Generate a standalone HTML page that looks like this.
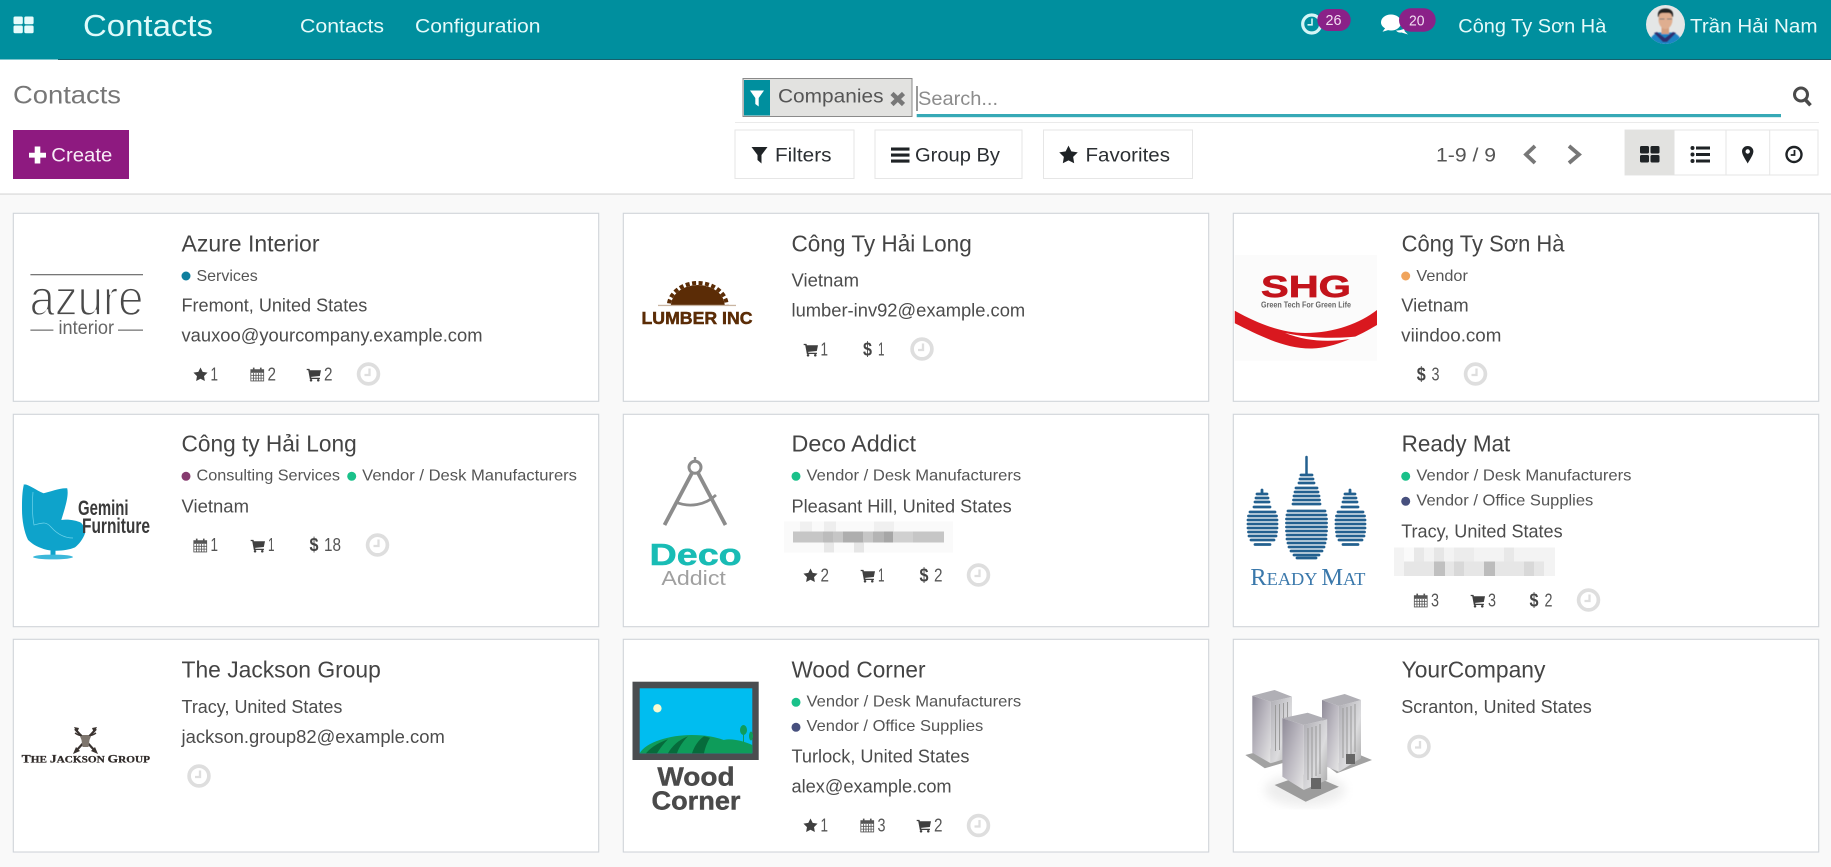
<!DOCTYPE html>
<html lang="vi"><head><meta charset="utf-8"><title>Contacts</title>
<style>
html,body{margin:0;padding:0;background:#f9f9f9;width:1831px;height:867px;overflow:hidden}
svg{display:block}
text{font-family:"Liberation Sans","Noto Sans CJK SC",sans-serif}
.c{fill:#fff;stroke:#d0d4d9;stroke-width:1.1}
.ttl{font-size:23px;fill:#444}
.tag{font-size:16px;fill:#555}
.bd{font-size:18.6px;fill:#4c4c4c}
.n{font-size:18px;fill:#555}
.d{font-size:19px;fill:#444;font-weight:bold}
.nav{font-size:19px;fill:#e6fafa}
.btn{fill:#fff;stroke:#e6e6e6;stroke-width:1}
.bt{font-size:19.5px;fill:#2b2f33}
</style></head><body>
<svg xmlns="http://www.w3.org/2000/svg" width="1831" height="867" viewBox="0 0 1831 867">
<defs>
<symbol id="star" viewBox="0 0 16 16"><path fill="#3f3f3f" d="M8 .5l2.4 4.9 5.4.8-3.9 3.8.9 5.4L8 12.9l-4.8 2.5.9-5.4L.2 6.2l5.4-.8z"/></symbol>
<symbol id="star2" viewBox="0 0 16 16"><path fill="#1f2326" d="M8 .5l2.4 4.9 5.4.8-3.9 3.8.9 5.4L8 12.9l-4.8 2.5.9-5.4L.2 6.2l5.4-.8z"/></symbol>
<symbol id="cal" viewBox="0 0 16 16"><path fill="none" stroke="#555" stroke-width=".9" d="M.9 3h14.2v12.400H.9zM.9 6.200h14.200M.9 9.200h14.200M.9 12.300h14.200M3.800 6v9.400M6.600 6v9.400M9.400 6v9.400M12.200 6v9.400"/><path fill="#555" d="M.9 3h14.200v2.600H.9zM3.200.7h1.800v3.400H3.200zM11 .7h1.800v3.400H11z"/></symbol>
<symbol id="cart" viewBox="0 0 16 16"><path fill="#3f3f3f" d="M.2 2h3.100l.4 1.600H16l-1.300 6.300-9.600 1 .3 1h9.400V13.300H3.700L1.900 3.400H.2z"/><circle cx="5" cy="14.600" r="1.400" fill="#3f3f3f"/><circle cx="13" cy="14.600" r="1.400" fill="#3f3f3f"/></symbol>
<symbol id="clk" viewBox="0 0 24 24"><circle cx="12" cy="12" r="9.900" fill="none" stroke="#dedede" stroke-width="3.700"/><path fill="none" stroke="#dedede" stroke-width="2.300" d="M13 6.500V13H8"/></symbol>
<linearGradient id="gl" x1="0" x2="1" y1="0" y2="1"><stop offset="0" stop-color="#8f8b98"/><stop offset=".5" stop-color="#bdbac2"/><stop offset="1" stop-color="#e6e6e6"/></linearGradient>
<linearGradient id="gr" x1="0" x2="1" y1="0" y2="1"><stop offset="0" stop-color="#b0afb5"/><stop offset=".6" stop-color="#dcdcde"/><stop offset="1" stop-color="#a8a8a8"/></linearGradient>
<clipPath id="av"><circle cx="1665.500" cy="24.500" r="19.500"/></clipPath>
<clipPath id="saw"><rect x="650" y="278" width="96" height="27"/></clipPath>
<filter id="sh"><feGaussianBlur stdDeviation="5"/></filter>
<filter id="s1"><feGaussianBlur stdDeviation=".5"/></filter>
</defs>

<!-- NAVBAR -->
<rect width="1831" height="59.500" fill="#008f9e"/>
<rect x="58" y="59" width="1773" height="1" fill="#17606c"/>
<g fill="#e6fbfb"><rect x="13.500" y="16.500" width="9.300" height="7.800" rx="1.500"/><rect x="24.300" y="16.500" width="9.300" height="7.800" rx="1.500"/><rect x="13.500" y="25.500" width="9.300" height="7.800" rx="1.500"/><rect x="24.300" y="25.500" width="9.300" height="7.800" rx="1.500"/></g>
<text x="83" y="36" font-size="31" fill="#dffafa" textLength="130" lengthAdjust="spacingAndGlyphs">Contacts</text>
<text class="nav" x="300" y="32.500" textLength="84" lengthAdjust="spacingAndGlyphs">Contacts</text>
<text class="nav" x="415" y="32.500" textLength="125.500" lengthAdjust="spacingAndGlyphs">Configuration</text>
<circle cx="1311.700" cy="24" r="9" fill="none" stroke="#d4f6f6" stroke-width="3.200"/><path fill="none" stroke="#d4f6f6" stroke-width="1.600" d="M1312 18.500v6.300h-4.500"/>
<rect x="1317.300" y="9" width="33.400" height="22" rx="11" fill="#8a2188"/>
<text x="1325.500" y="25" font-size="14.500" fill="#f3dff2" textLength="16" lengthAdjust="spacingAndGlyphs">26</text>
<path fill="#fff" d="M1391 14.500c5.800 0 10 3.500 10 8s-4.200 8-10 8c-1 0-2-.1-2.900-.4l-5.600 1.700 2.600-3.500c-2.500-1.400-4.100-3.500-4.100-5.800 0-4.500 4.200-8 10-8z"/>
<path fill="#fff" d="M1396 30.500c3.500 0 7.500-1 9-2.500l-.5 3 3.500 3.500-6.500-2c-2 .3-4 0-5.500-2z"/>
<rect x="1399" y="8.300" width="36.700" height="23.400" rx="11.700" fill="#8a2188"/>
<text x="1409" y="25.500" font-size="14.500" fill="#f3dff2" textLength="15.500" lengthAdjust="spacingAndGlyphs">20</text>
<text class="nav" x="1458.300" y="32.500" textLength="148" lengthAdjust="spacingAndGlyphs">Công Ty Sơn Hà</text>
<g clip-path="url(#av)"><rect x="1645" y="4" width="41" height="41" fill="#e4e6e6"/>
<g filter="url(#s1)"><path fill="#1c84c6" d="M1649 46c0-9 5-12 9-13.500h15c4 1.500 9 4.500 9 13.500z"/><path fill="#2d2f70" d="M1657 32l8 6 8-6 3 1-9 9h-4l-9-9z"/>
<rect x="1661.500" y="26" width="7.500" height="8" fill="#d49f80"/><ellipse cx="1665.500" cy="19.500" rx="7" ry="9.500" fill="#dfae90"/>
<path fill="#222" d="M1658 17c-1-6 2.500-8.500 7.500-8.500s8.500 2.500 7.500 8.500l-1-.5c-.5-2.500-1.500-3.500-3.500-3.500h-6c-2.500 0-3.500 1.500-3.500 3.500z"/>
<path fill="#777" d="M1659.500 18.500h5v1h-5zM1667 18.500h5v1h-5z"/></g></g>
<text class="nav" x="1690" y="32.500" textLength="127.500" lengthAdjust="spacingAndGlyphs">Trần Hải Nam</text>

<!-- CONTROL PANEL -->
<rect y="60" width="1831" height="134" fill="#fff"/>
<rect y="193.500" width="1831" height="1.100" fill="#d6d6d6"/>
<text x="13" y="103.500" font-size="25" fill="#777" textLength="108" lengthAdjust="spacingAndGlyphs">Contacts</text>
<rect x="13" y="130" width="116" height="49" fill="#8e1a80"/>
<path fill="#fff" d="M34.700 147h5.600v6.300H46v4.800h-5.700v5.900h-5.600v-5.900H29v-4.800h5.700z" transform="translate(0,-.5)"/>
<text x="51.300" y="161.500" font-size="19.500" fill="#f8ecf7" textLength="61" lengthAdjust="spacingAndGlyphs">Create</text>

<rect x="743" y="78.500" width="169" height="38" fill="#e2e2e0" stroke="#8a8a8a" stroke-width="1"/>
<rect x="744" y="80" width="26" height="35.500" fill="#008f9e"/>
<path fill="#fff" d="M750 90.500h14l-5.300 7.500v8.500l-3.400-2.500v-6z"/>
<text x="778" y="102.500" font-size="19.500" fill="#555" textLength="105.500" lengthAdjust="spacingAndGlyphs">Companies</text>
<path fill="none" stroke="#777" stroke-width="4.500" d="M892 93.500l11.500 11M903.500 93.500L892 104.500"/>
<rect x="735" y="122" width="1084" height="1" fill="#eaeaea"/>
<text x="918" y="105" font-size="19.500" fill="#8c8c8c" textLength="80" lengthAdjust="spacingAndGlyphs">Search...</text>
<rect x="916.500" y="86" width="1" height="25" fill="#333"/>
<rect x="916.700" y="114" width="864.300" height="3.200" fill="#37a9b6"/>
<circle cx="1801" cy="94.500" r="6.500" fill="none" stroke="#4a4a4a" stroke-width="3"/><path stroke="#4a4a4a" stroke-width="3.600" d="M1805.200 99.500l5.300 5.800"/>

<rect class="btn" x="735" y="130" width="119" height="48.500"/>
<path fill="#1f2326" d="M751.500 147h16l-6 8v8.500l-4-3.500v-5z"/>
<text class="bt" x="775" y="161.500" textLength="56.500" lengthAdjust="spacingAndGlyphs">Filters</text>
<rect class="btn" x="875" y="130" width="147" height="48.500"/>
<path fill="#1f2326" d="M891 147.500h18.500v3.100H891zM891 153.500h18.500v3.100H891zM891 159.500h18.500v3.100H891z"/>
<text class="bt" x="915" y="161.500" textLength="85" lengthAdjust="spacingAndGlyphs">Group By</text>
<rect class="btn" x="1043.500" y="130" width="149" height="48.500"/>
<use href="#star2" x="1058.500" y="145" width="20" height="19"/>
<text class="bt" x="1085.500" y="161.500" textLength="84.500" lengthAdjust="spacingAndGlyphs">Favorites</text>
<text x="1436" y="161.500" font-size="19" fill="#555" textLength="60" lengthAdjust="spacingAndGlyphs">1-9 / 9</text>
<path fill="none" stroke="#777" stroke-width="3.800" d="M1535 146l-9 8.500 9 8.500M1569 146l10 8.500-10 8.500"/>
<rect x="1625" y="130" width="193" height="45" fill="#fff" stroke="#e6e6e6" stroke-width="1"/>
<rect x="1625" y="130" width="49.500" height="45" fill="#e2e2e0"/>
<path stroke="#e6e6e6" d="M1726 130v45M1769.700 130v45"/>
<g fill="#1f2326"><rect x="1640" y="146" width="9" height="7.500" rx="1.500"/><rect x="1650.500" y="146" width="9" height="7.500" rx="1.500"/><rect x="1640" y="155" width="9" height="7.500" rx="1.500"/><rect x="1650.500" y="155" width="9" height="7.500" rx="1.500"/>
<circle cx="1692.500" cy="148" r="2"/><circle cx="1692.500" cy="154.500" r="2"/><circle cx="1692.500" cy="161" r="2"/><rect x="1696" y="146.500" width="14" height="3"/><rect x="1696" y="153" width="14" height="3"/><rect x="1696" y="159.500" width="14" height="3"/></g>
<path fill="#1f2326" fill-rule="evenodd" d="M1747.700 146c3.300 0 5.700 2.400 5.700 5.400 0 3.300-3.400 8-5.700 12.100-2.300-4.100-5.700-8.800-5.700-12.100 0-3 2.400-5.400 5.700-5.400zm0 3.300a2.200 2.200 0 100 4.400 2.200 2.200 0 000-4.400z"/>
<circle cx="1794" cy="154.500" r="7.500" fill="none" stroke="#1f2326" stroke-width="2.400"/><path fill="none" stroke="#1f2326" stroke-width="1.800" d="M1794.500 150v5h-3.800"/>

<!-- CARDS -->
<g><rect class="c" x="13.300" y="213.300" width="585.400" height="188"/><rect class="c" x="623.300" y="213.300" width="585.400" height="188"/><rect class="c" x="1233.300" y="213.300" width="585.400" height="188"/>
<rect class="c" x="13.300" y="414.300" width="585.400" height="212.400"/><rect class="c" x="623.300" y="414.300" width="585.400" height="212.400"/><rect class="c" x="1233.300" y="414.300" width="585.400" height="212.400"/>
<rect class="c" x="13.300" y="639.300" width="585.400" height="212.700"/><rect class="c" x="623.300" y="639.300" width="585.400" height="212.700"/><rect class="c" x="1233.300" y="639.300" width="585.400" height="212.700"/></g>

<!-- Azure Interior -->
<rect x="30.400" y="274" width="112.600" height="1.300" fill="#777"/>
<text x="29.500" y="315" font-size="50" fill="#4a4a4a" stroke="#fff" stroke-width="1.700" textLength="114" lengthAdjust="spacingAndGlyphs">azure</text>
<rect x="30.400" y="329.500" width="23" height="1.300" fill="#777"/><rect x="118" y="329.500" width="25" height="1.300" fill="#777"/>
<text x="58.500" y="334" font-size="19" fill="#666" textLength="55.500" lengthAdjust="spacingAndGlyphs">interior</text>
<text class="ttl" x="181.500" y="251.700" textLength="138" lengthAdjust="spacingAndGlyphs">Azure Interior</text>
<circle cx="186" cy="276" r="4.500" fill="#0f7f9e"/><text class="tag" x="196.500" y="281" textLength="61.300" lengthAdjust="spacingAndGlyphs">Services</text>
<text class="bd" x="181.500" y="311.700" textLength="185.800" lengthAdjust="spacingAndGlyphs">Fremont, United States</text>
<text class="bd" x="181.500" y="341.700" textLength="301" lengthAdjust="spacingAndGlyphs">vauxoo@yourcompany.example.com</text>
<use href="#star" x="193" y="367" width="15" height="14.500"/><text class="n" x="210.500" y="380.500" textLength="7.500" lengthAdjust="spacingAndGlyphs">1</text>
<use href="#cal" x="250" y="367" width="14.500" height="14.500"/><text class="n" x="267.500" y="380.500" textLength="8.500" lengthAdjust="spacingAndGlyphs">2</text>
<use href="#cart" x="306.500" y="367" width="14.500" height="14.500"/><text class="n" x="324" y="380.500" textLength="8.500" lengthAdjust="spacingAndGlyphs">2</text>
<use href="#clk" x="356.500" y="362" width="24" height="24"/>

<!-- Cong Ty Hai Long -->
<ellipse cx="697.800" cy="306" rx="27" ry="21" fill="#5b2c06" clip-path="url(#saw)"/>
<ellipse cx="697.800" cy="306" rx="29" ry="23" fill="none" stroke="#5b2c06" stroke-width="4" stroke-dasharray="4 2.500" clip-path="url(#saw)"/>
<rect x="658" y="304.800" width="78" height="1.300" fill="#c9b5a2"/>
<text x="641.500" y="324" font-size="17.500" font-weight="bold" fill="#5b2c06" stroke="#5b2c06" stroke-width=".5" textLength="111" lengthAdjust="spacingAndGlyphs">LUMBER INC</text>
<text class="ttl" x="791.500" y="251.700" textLength="180.300" lengthAdjust="spacingAndGlyphs">Công Ty Hải Long</text>
<text class="bd" x="791.500" y="286.700" textLength="67.500" lengthAdjust="spacingAndGlyphs">Vietnam</text>
<text class="bd" x="791.500" y="316.700" textLength="233.700" lengthAdjust="spacingAndGlyphs">lumber-inv92@example.com</text>
<use href="#cart" x="803.500" y="342" width="14.500" height="14.500"/><text class="n" x="820.500" y="355.500" textLength="7.500" lengthAdjust="spacingAndGlyphs">1</text>
<text class="d" x="863" y="355.500" textLength="9" lengthAdjust="spacingAndGlyphs">$</text><text class="n" x="878" y="355.500" textLength="6.500" lengthAdjust="spacingAndGlyphs">1</text>
<use href="#clk" x="910" y="337" width="24" height="24"/>

<!-- Cong Ty Son Ha -->
<rect x="1234.800" y="255" width="142.200" height="105.700" fill="#fbfbfb"/>
<text x="1261" y="297" font-size="31" font-weight="bold" fill="#c3141c" stroke="#c3141c" stroke-width=".7" textLength="90" lengthAdjust="spacingAndGlyphs">SHG</text>
<text x="1261" y="307.700" font-size="8.500" font-weight="bold" fill="#666" textLength="90" lengthAdjust="spacingAndGlyphs">Green Tech For Green Life</text>
<path fill="#d9181f" d="M1234.800 310.700C1262 326 1285 333 1305 333c30 0 55-10 72-23v15c-17 10-42 23-65 23.500-27 .5-54-13.500-77.200-25.200z"/>
<path fill="#fff" d="M1285 333c28 11 58 9 83 2-27 4-55 4-83-2z"/>
<text class="ttl" x="1401.600" y="251.700" textLength="162.900" lengthAdjust="spacingAndGlyphs">Công Ty Sơn Hà</text>
<circle cx="1405.700" cy="276" r="4.500" fill="#f0a45c"/><text class="tag" x="1416.400" y="281" textLength="51.500" lengthAdjust="spacingAndGlyphs">Vendor</text>
<text class="bd" x="1401.200" y="311.700" textLength="67.500" lengthAdjust="spacingAndGlyphs">Vietnam</text>
<text class="bd" x="1401.200" y="341.700" textLength="100.200" lengthAdjust="spacingAndGlyphs">viindoo.com</text>
<text class="d" x="1416.800" y="380.500" textLength="9" lengthAdjust="spacingAndGlyphs">$</text><text class="n" x="1431.500" y="380.500" textLength="8" lengthAdjust="spacingAndGlyphs">3</text>
<use href="#clk" x="1463.500" y="362" width="24" height="24"/>

<!-- Cong ty Hai Long (Gemini) -->
<path fill="#0ea3cb" d="M23.700 484c6 1 12 6 19.800 9.300 7-1.500 16-5.500 23.700-5 2 8-3 22-5.900 31.700 7-1 15 .5 19.700 2.700 3 3 4.500 7 4 10.600-2 6-6 11-10 14.100-8 3.500-20 4-28 2.500-8-2-14-5-19-10-4-8-6-20-6-30 0-9 0-18 2-25.900z"/>
<path fill="none" stroke="#6fd3ea" stroke-width=".7" d="M33 492c-1 12-1 22 1 33 8-2 12-4 17 2 7 8 14 11 22 11"/>
<rect x="50.500" y="550" width="5" height="6" fill="#0ea3cb"/><ellipse cx="53" cy="557" rx="20" ry="2.400" fill="#3cb8da"/>
<text x="78" y="515" font-size="21" font-weight="bold" fill="#3a3a3a" textLength="50.500" lengthAdjust="spacingAndGlyphs">Gemini</text>
<text x="82" y="533" font-size="21" font-weight="bold" fill="#3a3a3a" textLength="68" lengthAdjust="spacingAndGlyphs">Furniture</text>
<text class="ttl" x="181.500" y="451.700" textLength="175.200" lengthAdjust="spacingAndGlyphs">Công ty Hải Long</text>
<circle cx="186" cy="476.300" r="4.500" fill="#863b6f"/><text class="tag" x="196.500" y="480.700" textLength="143.500" lengthAdjust="spacingAndGlyphs">Consulting Services</text>
<circle cx="351.700" cy="476.300" r="4.500" fill="#1ac18a"/><text class="tag" x="362.200" y="480.700" textLength="214.800" lengthAdjust="spacingAndGlyphs">Vendor / Desk Manufacturers</text>
<text class="bd" x="181.500" y="512.700" textLength="67.500" lengthAdjust="spacingAndGlyphs">Vietnam</text>
<use href="#cal" x="193" y="538" width="14.500" height="14.500"/><text class="n" x="210.500" y="551" textLength="7.500" lengthAdjust="spacingAndGlyphs">1</text>
<use href="#cart" x="250.500" y="538" width="14.500" height="14.500"/><text class="n" x="268" y="551" textLength="6.500" lengthAdjust="spacingAndGlyphs">1</text>
<text class="d" x="309.500" y="551" textLength="9" lengthAdjust="spacingAndGlyphs">$</text><text class="n" x="324" y="551" textLength="17" lengthAdjust="spacingAndGlyphs">18</text>
<use href="#clk" x="365.500" y="533" width="24" height="24"/>

<!-- Deco Addict -->
<g fill="none" stroke="#8c8c8c" stroke-width="3.800"><circle cx="695" cy="467.300" r="6" stroke-width="3"/><path stroke-width="2.400" d="M695 457v4"/><path d="M692 473l-27.500 52M698 473l27.500 52"/><path stroke-width="2.800" d="M675.500 502c14 6 30 3 40.500-7"/></g>
<text x="649.500" y="565" font-size="31" font-weight="bold" fill="#19bcb5" stroke="#19bcb5" stroke-width=".5" textLength="92.200" lengthAdjust="spacingAndGlyphs">Deco</text>
<text x="661.400" y="585" font-size="20" fill="#a0a0a0" textLength="64.500" lengthAdjust="spacingAndGlyphs">Addict</text>
<text class="ttl" x="791.500" y="451.700" textLength="124.500" lengthAdjust="spacingAndGlyphs">Deco Addict</text>
<circle cx="796" cy="476.300" r="4.500" fill="#1ac18a"/><text class="tag" x="806.500" y="480.700" textLength="214.700" lengthAdjust="spacingAndGlyphs">Vendor / Desk Manufacturers</text>
<text class="bd" x="791.500" y="512.700" textLength="220.200" lengthAdjust="spacingAndGlyphs">Pleasant Hill, United States</text>
<g shape-rendering="crispEdges">
<rect x="784" y="521.700" width="169" height="31" fill="#fafafa"/>
<rect x="800" y="521.700" width="12" height="10" fill="#f0f0f0"/><rect x="824" y="521.700" width="12" height="10" fill="#eeeeee"/><rect x="874" y="521.700" width="20" height="10" fill="#f0f0f0"/><rect x="824" y="542.700" width="10" height="10" fill="#e8e8e8"/><rect x="854" y="542.700" width="10" height="10" fill="#e6e6e6"/>
<rect x="793" y="531.700" width="151" height="11" fill="#c6c6c6"/><rect x="843" y="531.700" width="20" height="11" fill="#aeaeae"/><rect x="873" y="531.700" width="20" height="11" fill="#b4b4b4"/><rect x="884" y="531.700" width="9" height="11" fill="#a6a6a6"/><rect x="893" y="531.700" width="20" height="11" fill="#d0d0d0"/><rect x="823" y="531.700" width="10" height="11" fill="#bcbcbc"/></g>
<use href="#star" x="803" y="568" width="15" height="14.500"/><text class="n" x="820.500" y="581.500" textLength="8.500" lengthAdjust="spacingAndGlyphs">2</text>
<use href="#cart" x="860.500" y="568" width="14.500" height="14.500"/><text class="n" x="878" y="581.500" textLength="6.500" lengthAdjust="spacingAndGlyphs">1</text>
<text class="d" x="919.500" y="581.500" textLength="9" lengthAdjust="spacingAndGlyphs">$</text><text class="n" x="934" y="581.500" textLength="8.500" lengthAdjust="spacingAndGlyphs">2</text>
<use href="#clk" x="966.500" y="563" width="24" height="24"/>

<!-- Ready Mat -->
<g fill="none" stroke="#23608f" stroke-width="2.800" stroke-linecap="round">
<path stroke-width="2.500" d="M1306.500 457v17"/>
<path d="M1301 475h11M1300 479h13M1299 483h15M1296 488h21M1295 492h23M1294 496h25M1293.500 500h26M1293 504h27M1288 511h37M1287 515h39M1286.500 519h40M1286.500 523h40M1286.500 527h40M1286.500 531h40M1287 535h39M1287 539h39M1288 543h37M1289 547h35M1291 551h31M1294 555h25M1297 558h19"/>
<path d="M1262 490v3M1257 494h10M1256 498h12M1255 502h14M1254 507h16M1250 512h25M1248.500 516h28M1248 520h29M1248 524h29M1248 528h29M1248.500 532h28M1249 536h27M1251 540h23M1255 544.500h15"/>
<path d="M1350 490v3M1345 494h10M1344 498h12M1343 502h14M1342 507h16M1338 512h25M1336.500 516h28M1336 520h29M1336 524h29M1336 528h29M1336.500 532h28M1337 536h27M1339 540h23M1343 544.500h15"/></g>
<text x="1250.400" y="585" fill="#3a78ab" textLength="115" lengthAdjust="spacingAndGlyphs" style="font-family:'Liberation Serif',serif;font-size:18px"><tspan style="font-family:'Liberation Serif',serif;font-size:24px">R</tspan>EADY <tspan style="font-family:'Liberation Serif',serif;font-size:24px">M</tspan>AT</text>
<text class="ttl" x="1401.600" y="451.700" textLength="108.700" lengthAdjust="spacingAndGlyphs">Ready Mat</text>
<circle cx="1405.700" cy="476.300" r="4.500" fill="#1ac18a"/><text class="tag" x="1416.400" y="480.700" textLength="215.100" lengthAdjust="spacingAndGlyphs">Vendor / Desk Manufacturers</text>
<circle cx="1405.700" cy="501.300" r="4.500" fill="#47507e"/><text class="tag" x="1416.400" y="505.700" textLength="176.900" lengthAdjust="spacingAndGlyphs">Vendor / Office Supplies</text>
<text class="bd" x="1401.200" y="537.300" textLength="161.400" lengthAdjust="spacingAndGlyphs">Tracy, United States</text>
<g shape-rendering="crispEdges">
<rect x="1394.200" y="547.300" width="160.800" height="28.700" fill="#f3f3f3"/>
<rect x="1404" y="547.300" width="10" height="14" fill="#fafafa"/><rect x="1414" y="547.300" width="10" height="14" fill="#e8e8e8"/><rect x="1434" y="547.300" width="10" height="14" fill="#e6e6e6"/><rect x="1454" y="547.300" width="20" height="14" fill="#ececec"/><rect x="1504" y="547.300" width="10" height="14" fill="#e8e8e8"/>
<rect x="1404" y="561.300" width="140" height="14.700" fill="#e6e6e6"/><rect x="1434" y="561.300" width="11" height="14.700" fill="#c0c0c0"/><rect x="1484" y="561.300" width="11" height="14.700" fill="#bcbcbc"/><rect x="1454" y="561.300" width="10" height="14.700" fill="#d8d8d8"/><rect x="1524" y="561.300" width="10" height="14.700" fill="#d8d8d8"/></g>
<use href="#cal" x="1413.500" y="593" width="14.500" height="14.500"/><text class="n" x="1431" y="606.500" textLength="8" lengthAdjust="spacingAndGlyphs">3</text>
<use href="#cart" x="1470.500" y="593" width="14.500" height="14.500"/><text class="n" x="1488" y="606.500" textLength="8" lengthAdjust="spacingAndGlyphs">3</text>
<text class="d" x="1529.500" y="606.500" textLength="9" lengthAdjust="spacingAndGlyphs">$</text><text class="n" x="1544.500" y="606.500" textLength="8" lengthAdjust="spacingAndGlyphs">2</text>
<use href="#clk" x="1576.500" y="588" width="24" height="24"/>

<!-- Jackson -->
<g stroke="#3a3330" fill="#3a3330"><path fill="none" stroke-width="2.200" d="M75 729l20 22M96 729l-20 22"/><path stroke="none" d="M74 727l5 1-2 5zM97 727l-5 1 2 5zM73 754l3-7 4 4zM98 754l-3-7-4 4z"/></g>
<path fill="#7d756d" d="M79.500 735h12l-2 5-1 7h-6l-1-7z"/>
<path fill="none" stroke="#3a3330" stroke-width="1.400" d="M75 733c3 2 5 3 7 2M96 733c-3 2-5 3-7 2"/>
<text x="21.700" y="762.700" fill="#2f2a28" stroke="#2f2a28" stroke-width=".25" font-weight="bold" textLength="128.300" lengthAdjust="spacingAndGlyphs" style="font-family:'Liberation Serif',serif;font-size:9.500px"><tspan style="font-size:11.500px;font-family:'Liberation Serif',serif">T</tspan>HE <tspan style="font-size:11.500px;font-family:'Liberation Serif',serif">J</tspan>ACKSON <tspan style="font-size:11.500px;font-family:'Liberation Serif',serif">G</tspan>ROUP</text>
<text class="ttl" x="181.500" y="677.700" textLength="199.300" lengthAdjust="spacingAndGlyphs">The Jackson Group</text>
<text class="bd" x="181.500" y="713" textLength="160.900" lengthAdjust="spacingAndGlyphs">Tracy, United States</text>
<text class="bd" x="181.500" y="743" textLength="263.300" lengthAdjust="spacingAndGlyphs">jackson.group82@example.com</text>
<use href="#clk" x="187" y="764" width="24" height="24"/>

<!-- Wood Corner -->
<rect x="632.500" y="681.700" width="126.200" height="78.300" fill="#4a4d50"/>
<rect x="639.700" y="688.300" width="112.600" height="65" fill="#00bdf0"/>
<circle cx="657.400" cy="708.300" r="4.200" fill="#f7fad0"/>
<ellipse cx="743.500" cy="730" rx="3.500" ry="5" fill="#0e9c5a"/><rect x="743" y="733" width="1" height="10" fill="#0e9c5a"/><ellipse cx="751" cy="736" rx="2" ry="4.500" fill="#0e9c5a"/>
<path fill="#0e9c5a" d="M639.700 753.300c6-11 30-18.300 52-18.300 14 0 24 2 32 5 8-2 20 1 28.600 5v8.300z"/>
<path fill="#066b3b" d="M646 753.300c6-7 14-11 22-14-4 4-8 9-11 14zM668 753.300c4-7 10-13 20-17-5 5-9 11-11 17zM692 753.300c2-6 6-13 12-17l6 1.500c-3 5-5 10-6 15.500z"/>
<text x="657.400" y="785.700" font-size="26" font-weight="bold" fill="#4a4a4a" stroke="#4a4a4a" stroke-width=".4" textLength="77.200" lengthAdjust="spacingAndGlyphs">Wood</text>
<text x="651.500" y="809.300" font-size="26" font-weight="bold" fill="#4a4a4a" stroke="#4a4a4a" stroke-width=".4" textLength="89" lengthAdjust="spacingAndGlyphs">Corner</text>
<text class="ttl" x="791.500" y="677.700" textLength="134" lengthAdjust="spacingAndGlyphs">Wood Corner</text>
<circle cx="796" cy="702.300" r="4.500" fill="#1ac18a"/><text class="tag" x="806.500" y="706.700" textLength="214.700" lengthAdjust="spacingAndGlyphs">Vendor / Desk Manufacturers</text>
<circle cx="796" cy="727.300" r="4.500" fill="#47507e"/><text class="tag" x="806.500" y="731.200" textLength="176.800" lengthAdjust="spacingAndGlyphs">Vendor / Office Supplies</text>
<text class="bd" x="791.500" y="762.700" textLength="177.900" lengthAdjust="spacingAndGlyphs">Turlock, United States</text>
<text class="bd" x="791.500" y="792.700" textLength="160.100" lengthAdjust="spacingAndGlyphs">alex@example.com</text>
<use href="#star" x="803" y="818" width="15" height="14.500"/><text class="n" x="820.500" y="831.500" textLength="7.500" lengthAdjust="spacingAndGlyphs">1</text>
<use href="#cal" x="860" y="818" width="14.500" height="14.500"/><text class="n" x="877.500" y="831.500" textLength="8" lengthAdjust="spacingAndGlyphs">3</text>
<use href="#cart" x="916.500" y="818" width="14.500" height="14.500"/><text class="n" x="934" y="831.500" textLength="8.500" lengthAdjust="spacingAndGlyphs">2</text>
<use href="#clk" x="966.500" y="813.500" width="24" height="24"/>

<!-- YourCompany buildings -->
<ellipse cx="1305" cy="790" rx="40" ry="16" fill="#d8d8d8" filter="url(#sh)" opacity=".45"/>
<path fill="#a2a2a2" d="M1245.300 755l19.500 13.300 27.200-8-20-12zM1328.300 766.700l8.600 6.600 35.100-13.300-12-5z"/>
<path fill="url(#gl)" d="M1252.300 695.700l18.400 6v61.600l-18.400-10.600z"/><path fill="url(#gr)" d="M1270.700 701.700l21.300-5v60l-21.300 6.600z"/><path fill="#b0afb5" d="M1252.300 695.700l22.300-5.700 17.400 6.700-21.300 5z"/>
<path stroke="#9a9a9a" d="M1275.500 705v46M1279.500 704v46M1283.500 703v45M1287.500 702v45"/>
<path fill="url(#gl)" d="M1322 700l16.900 6v65.700l-16.900-7z"/><path fill="url(#gr)" d="M1338.900 706l22.100-6v58.300l-22.100 13.400z"/><path fill="#b0afb5" d="M1322 700l22.700-6 16.300 6-22.100 6z"/>
<path stroke="#9a9a9a" d="M1343 708v50M1347 707v49M1351 706v48M1355 704v48"/>
<rect x="1346" y="754" width="9" height="10" fill="#666"/>
<path fill="#9c9c9c" d="M1274.600 785l31.100 16.700 33.200-15-31.200-13.400z"/>
<path fill="url(#gl)" d="M1282.400 718.300l21.400 6.700v65l-21.400-13.300z"/><path fill="url(#gr)" d="M1303.800 725l23.400-5.700V780l-23.400 10z"/><path fill="#b0afb5" d="M1282.400 718.300l25.300-5.600 19.500 6.600-23.400 5.700z"/>
<path stroke="#9a9a9a" d="M1308 728v52M1312 727v51M1316 726v50M1320 724v50"/>
<rect x="1311" y="778" width="10" height="11" fill="#666"/>
<text class="ttl" x="1401.600" y="677.700" textLength="143.800" lengthAdjust="spacingAndGlyphs">YourCompany</text>
<text class="bd" x="1401.200" y="713" textLength="190.600" lengthAdjust="spacingAndGlyphs">Scranton, United States</text>
<use href="#clk" x="1407" y="734.500" width="24" height="24"/>
</svg>
</body></html>
